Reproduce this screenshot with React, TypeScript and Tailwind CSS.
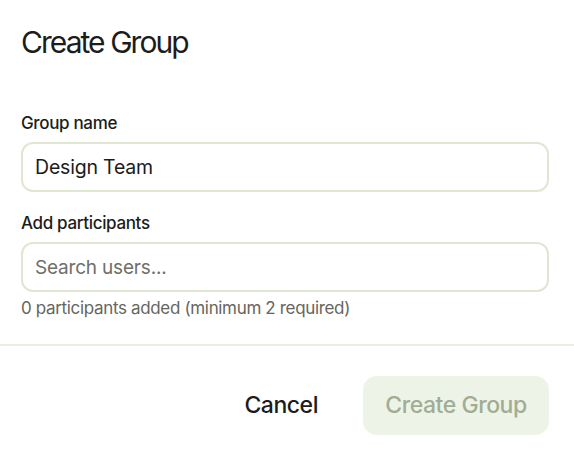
import { useState } from 'react';

const CreateGroupDialog = () => {
  const [groupName, setGroupName] = useState('Design Team');
  const [query, setQuery] = useState('');
  const participants: string[] = [];
  const canSubmit = groupName.trim().length > 0 && participants.length >= 2;

  return (
    <div className="w-[574px] h-[458px] overflow-hidden bg-white font-['Inter',_'Liberation_Sans',_sans-serif] text-[#1c1c1a]">
      {/* Header */}
      <div className="px-[21px] pt-[24px]">
        <h2 className="text-[30px] leading-[36px] font-normal tracking-[-0.065em]">Create Group</h2>
      </div>

      {/* Form fields */}
      <div className="pl-[21px] pr-[25px] pt-[51px] pb-[25px]">
        <label className="block text-[17px] leading-[24px] font-medium tracking-[-0.02em]">Group name</label>
        <input
          value={groupName}
          onChange={(e) => setGroupName(e.target.value)}
          className="mt-[7px] block w-full h-[50px] rounded-[12px] border-2 border-[#dfe7d2] px-[12px] text-[19.5px] tracking-[-0.01em] text-[#1c1c1a] outline-none"
        />

        <label className="mt-[19px] block text-[17px] leading-[24px] font-medium tracking-[-0.02em]">Add participants</label>
        <input
          value={query}
          onChange={(e) => setQuery(e.target.value)}
          placeholder="Search users..."
          className="mt-[7px] block w-full h-[50px] rounded-[12px] border-2 border-[#dfe7d2] px-[12px] text-[19px] tracking-[-0.01em] text-[#1c1c1a] placeholder:text-[#6f6f68] outline-none"
        />
        <p className="mt-[5px] text-[17px] leading-[22px] tracking-[-0.02em] text-[#66665e]">
          {participants.length} participants added (minimum 2 required)
        </p>
      </div>

      {/* Footer actions */}
      <div className="border-t-2 border-[#e9f0e2] flex items-center justify-end gap-[23px] px-[25px] pt-[30px]">
        <button className="h-[59px] px-[22px] text-[23px] font-medium tracking-[-0.02em] text-[#1c1c1a]">Cancel</button>
        <button
          disabled={!canSubmit}
          className="h-[59px] w-[186px] rounded-[14px] bg-[#eef3e8] text-[23px] font-medium tracking-[-0.02em] text-[#a1ac94]"
        >
          Create Group
        </button>
      </div>
    </div>
  );
};

export default function App() {
  return <CreateGroupDialog />;
}
